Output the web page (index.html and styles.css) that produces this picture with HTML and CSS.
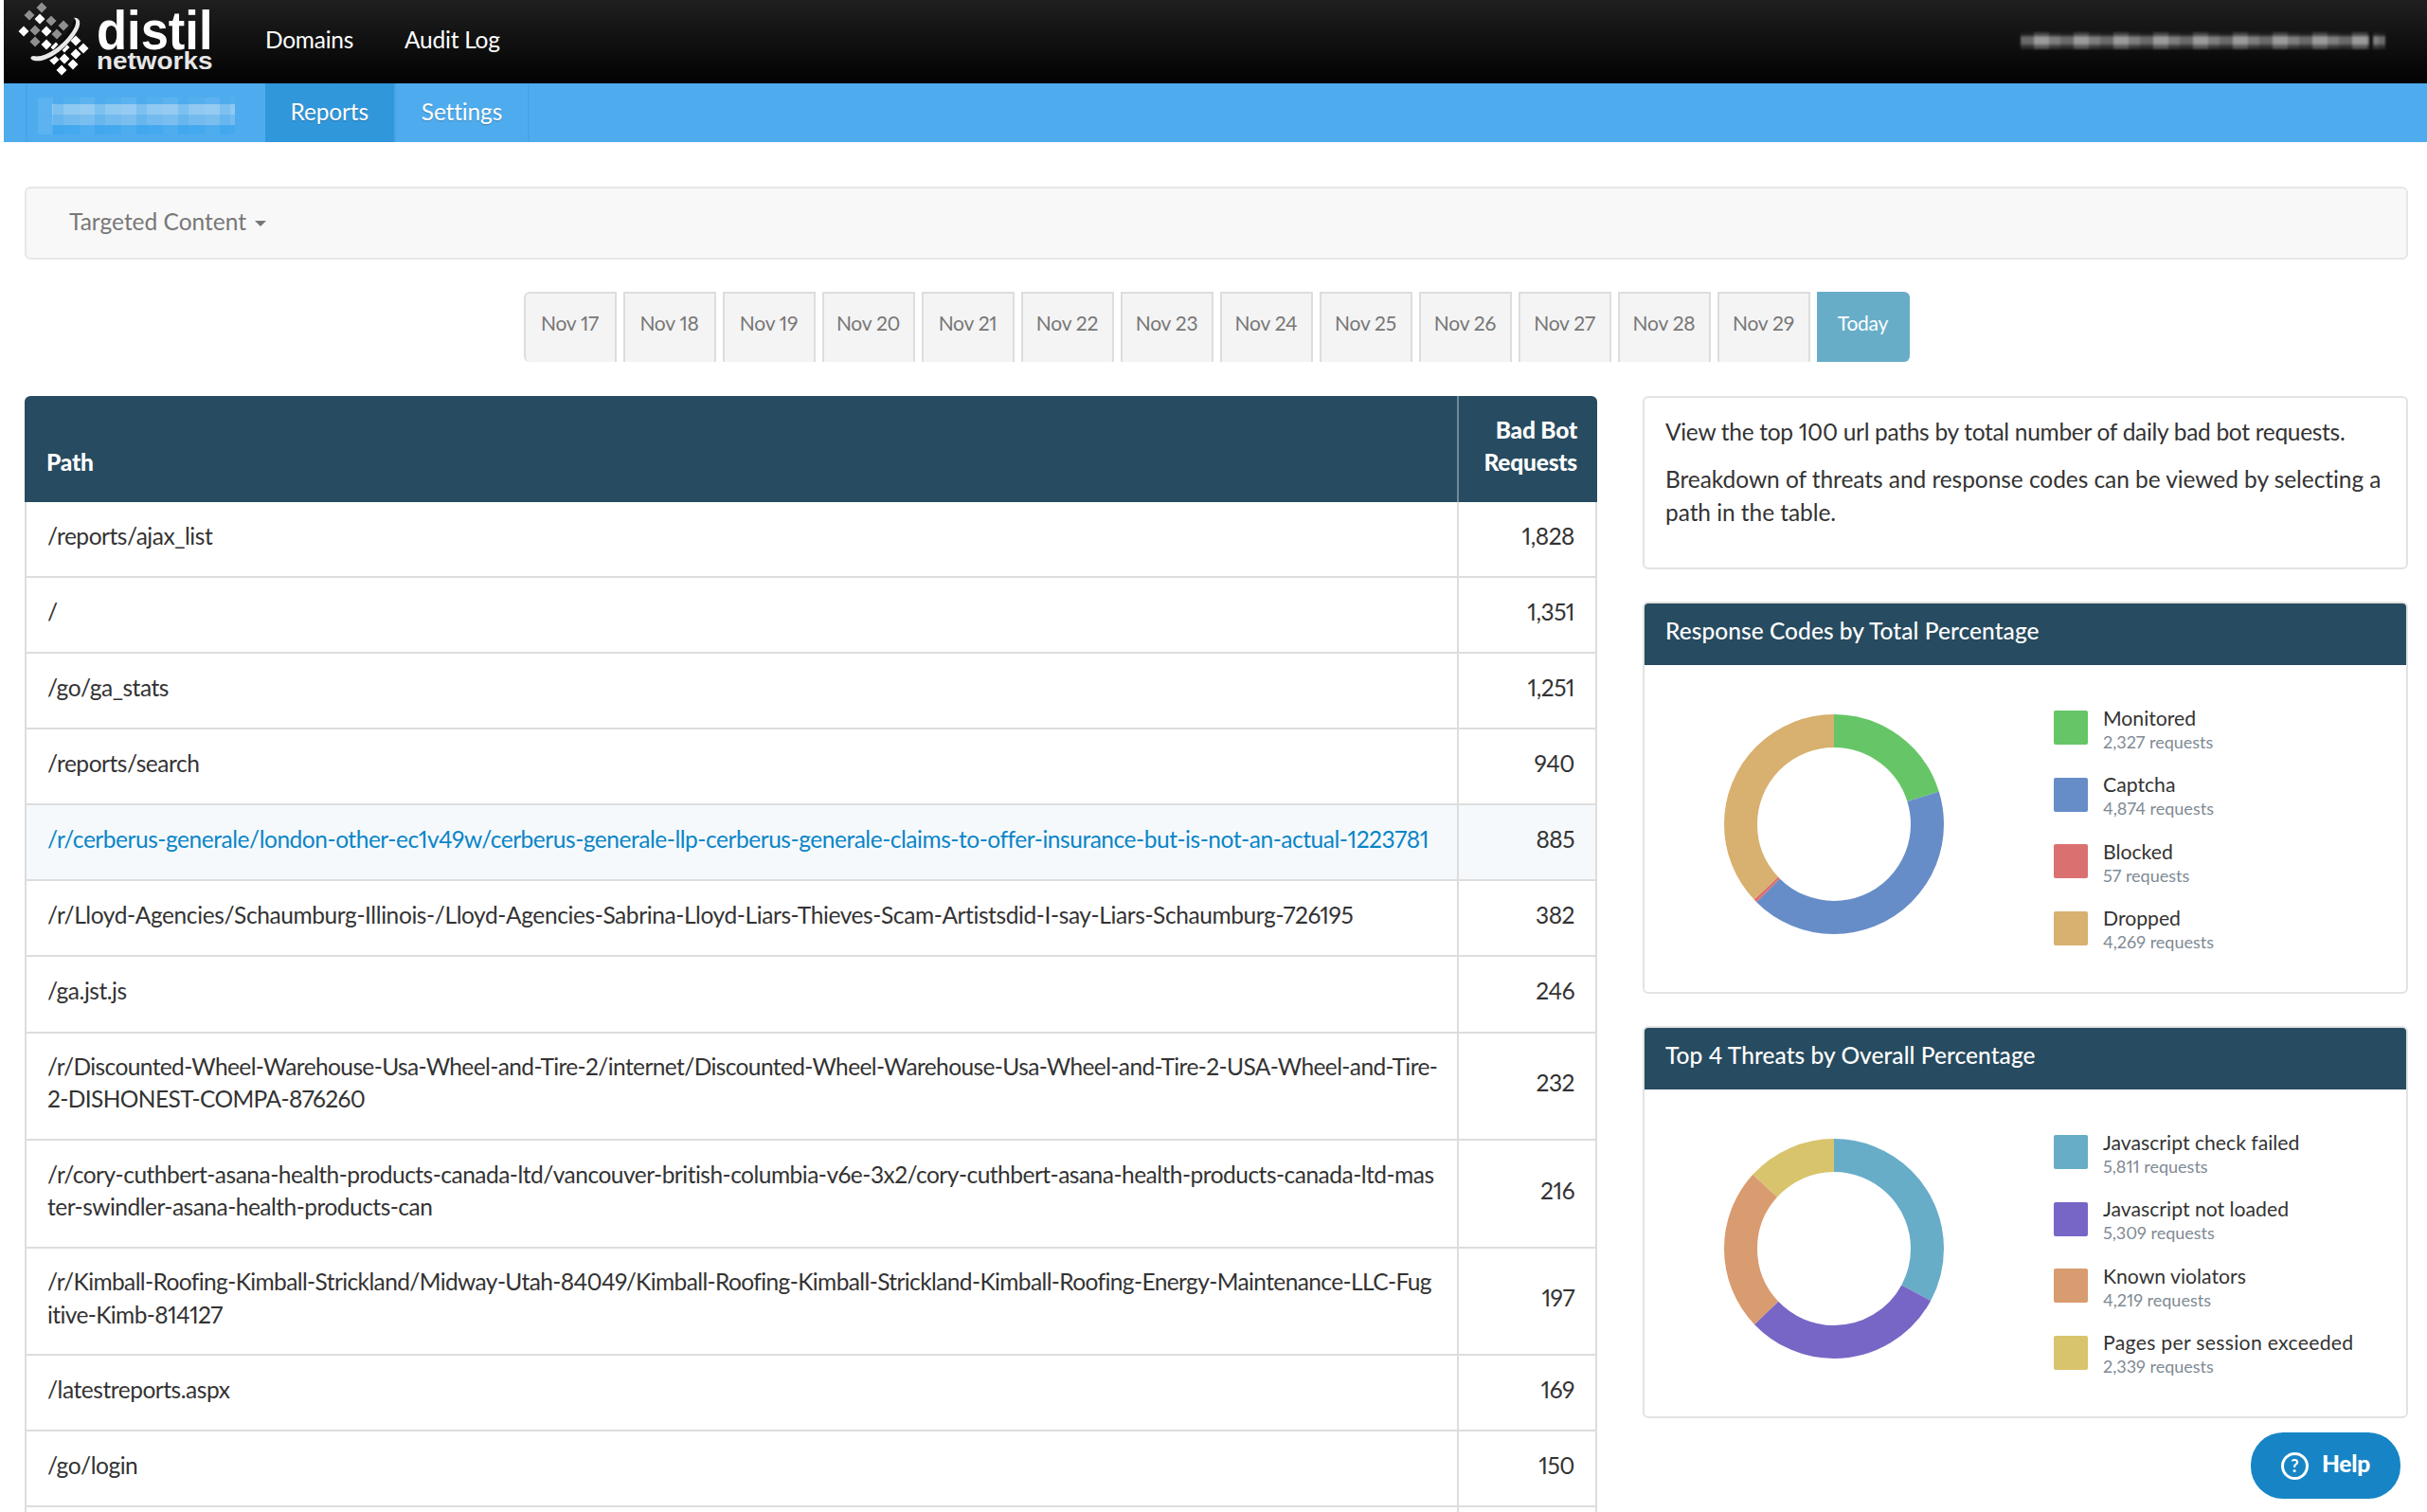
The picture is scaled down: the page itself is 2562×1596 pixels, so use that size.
FILE: index.html
```html
<!DOCTYPE html>
<html lang="en">
<head>
<meta charset="utf-8">
<title>Distil Networks - Reports</title>
<link rel="stylesheet" href="styles.css">
</head>
<body>
<div class="page">
  <header class="topbar">
    <svg class="logo" width="240" height="88" viewBox="4 0 240 88" aria-label="distil networks">
      <path class="dia-gray" d="M44 2.5l5.5 5.5-5.5 5.5-5.5-5.5zM31 10.500l5.500 5.500-5.500 5.500-5.500-5.500zM54 16.500l5.500 5.500-5.500 5.500-5.500-5.500zM67 21.500l5.500 5.500-5.500 5.500-5.500-5.500zM37 26.500l5.500 5.500-5.500 5.500-5.500-5.500zM60 30.500l5.500 5.500-5.500 5.500-5.500-5.500zM37 38.500l5.500 5.500-5.500 5.500-5.500-5.500z"/>
      <path class="dia-white" d="M42 14.500l5.500 5.500-5.500 5.500-5.500-5.500zM25 27.500l5.500 5.500-5.500 5.500-5.500-5.500zM49 27.500l5.500 5.500-5.500 5.500-5.500-5.500zM49 41.500l5.500 5.500-5.500 5.500-5.500-5.500zM80 37.500l5.500 5.500-5.500 5.500-5.500-5.500zM68 44.500l5.500 5.500-5.500 5.500-5.500-5.500zM88 45.500l5.500 5.500-5.500 5.500-5.500-5.500zM80 51.500l5.500 5.500-5.500 5.500-5.500-5.500zM68 56.500l5.500 5.500-5.500 5.500-5.500-5.500zM57 57.500l5.500 5.500-5.500 5.500-5.500-5.500zM77 62.500l5.500 5.500-5.500 5.500-5.500-5.500zM65 68.500l5.500 5.500-5.500 5.500-5.500-5.500zM59 44.500l5.500 5.500-5.500 5.500-5.500-5.500z"/>
      <path class="swoosh-gap" d="M34 63C50 68 70 48 82 22"/>
      <path class="swoosh" d="M35 59C31 60 32 63 36 64C50 67 72 50 82 32C87 23 83 18 78 19C82 22 80 28 75 35C65 49 47 62 35 59z"/>
      <text class="logo-big" x="102" y="52" textLength="122.500" lengthAdjust="spacingAndGlyphs">distil</text>
      <text class="logo-small" x="102" y="72.500" textLength="122.500" lengthAdjust="spacingAndGlyphs">networks</text>
    </svg>
    <nav class="topnav">
      <a class="topnav-link">Domains</a>
      <a class="topnav-link">Audit Log</a>
    </nav>
    <div class="user-blur"></div>
  </header>
  <div class="subbar">
    <div class="domain-cell"><div class="domain-blur"></div></div>
    <a class="subtab subtab-active">Reports</a>
    <a class="subtab subtab-settings">Settings</a>
  </div>
  <main class="content">
    <div class="filterbar">
      <span class="filter-label">Targeted Content</span><span class="caret"></span>
    </div>
    <div class="dates">
      <a class="date date-first">Nov 17</a>
      <a class="date">Nov 18</a>
      <a class="date">Nov 19</a>
      <a class="date">Nov 20</a>
      <a class="date">Nov 21</a>
      <a class="date">Nov 22</a>
      <a class="date">Nov 23</a>
      <a class="date">Nov 24</a>
      <a class="date">Nov 25</a>
      <a class="date">Nov 26</a>
      <a class="date">Nov 27</a>
      <a class="date">Nov 28</a>
      <a class="date">Nov 29</a>
      <a class="date date-today">Today</a>
    </div>
    <div class="columns">
      <table class="paths">
        <thead>
          <tr><th class="col-path">Path</th><th class="col-num">Bad Bot<br>Requests</th></tr>
        </thead>
        <tbody>
          <tr><td class="col-path">/reports/ajax_list</td><td class="col-num">1,828</td></tr>
          <tr><td class="col-path">/</td><td class="col-num">1,351</td></tr>
          <tr><td class="col-path">/go/ga_stats</td><td class="col-num">1,251</td></tr>
          <tr><td class="col-path">/reports/search</td><td class="col-num">940</td></tr>
          <tr class="row-active"><td class="col-path">/r/cerberus-generale/london-other-ec1v49w/cerberus-generale-llp-cerberus-generale-claims-to-offer-insurance-but-is-not-an-actual-1223781</td><td class="col-num">885</td></tr>
          <tr class="fit-loose"><td class="col-path">/r/Lloyd-Agencies/Schaumburg-Illinois-/Lloyd-Agencies-Sabrina-Lloyd-Liars-Thieves-Scam-Artistsdid-I-say-Liars-Schaumburg-726195</td><td class="col-num">382</td></tr>
          <tr><td class="col-path">/ga.jst.js</td><td class="col-num">246</td></tr>
          <tr class="row-two fit-tight"><td class="col-path">/r/Discounted-Wheel-Warehouse-Usa-Wheel-and-Tire-2/internet/Discounted-Wheel-Warehouse-Usa-Wheel-and-Tire-2-USA-Wheel-and-Tire-<br>2-DISHONEST-COMPA-876260</td><td class="col-num">232</td></tr>
          <tr class="row-two fit-mid"><td class="col-path">/r/cory-cuthbert-asana-health-products-canada-ltd/vancouver-british-columbia-v6e-3x2/cory-cuthbert-asana-health-products-canada-ltd-mas<br>ter-swindler-asana-health-products-can</td><td class="col-num">216</td></tr>
          <tr class="row-two fit-tight"><td class="col-path">/r/Kimball-Roofing-Kimball-Strickland/Midway-Utah-84049/Kimball-Roofing-Kimball-Strickland-Kimball-Roofing-Energy-Maintenance-LLC-Fug<br>itive-Kimb-814127</td><td class="col-num">197</td></tr>
          <tr><td class="col-path">/latestreports.aspx</td><td class="col-num">169</td></tr>
          <tr><td class="col-path">/go/login</td><td class="col-num">150</td></tr>
          <tr class="row-empty"><td class="col-path"></td><td class="col-num"></td></tr>
        </tbody>
      </table>
      <aside class="side">
        <section class="panel info">
          <p>View the top 100 url paths by total number of daily bad bot requests.</p>
          <p class="info-wide">Breakdown of threats and response codes can be viewed by selecting a path in the table.</p>
        </section>
        <section class="panel chart">
          <h2 class="chart-title">Response Codes by Total Percentage</h2>
          <div class="chart-body">
            <svg class="donut" width="232" height="232" viewBox="0 0 232 232">
              <g transform="rotate(-90 116 116)" fill="none" stroke-width="35">
                <circle cx="116" cy="116" r="98.5" pathLength="11527" stroke="#66c667" stroke-dasharray="2327 11527"/>
                <circle cx="116" cy="116" r="98.5" pathLength="11527" stroke="#678dc8" stroke-dasharray="4874 11527" stroke-dashoffset="-2327"/>
                <circle cx="116" cy="116" r="98.5" pathLength="11527" stroke="#db7070" stroke-dasharray="57 11527" stroke-dashoffset="-7201"/>
                <circle cx="116" cy="116" r="98.5" pathLength="11527" stroke="#d8b06f" stroke-dasharray="4269 11527" stroke-dashoffset="-7258"/>
              </g>
            </svg>
            <ul class="legend">
              <li class="legend-item"><span class="swatch sw-green"></span><div class="legend-text"><div class="legend-label">Monitored</div><div class="legend-sub">2,327 requests</div></div></li>
              <li class="legend-item"><span class="swatch sw-blue"></span><div class="legend-text"><div class="legend-label">Captcha</div><div class="legend-sub">4,874 requests</div></div></li>
              <li class="legend-item"><span class="swatch sw-red"></span><div class="legend-text"><div class="legend-label">Blocked</div><div class="legend-sub">57 requests</div></div></li>
              <li class="legend-item"><span class="swatch sw-tan"></span><div class="legend-text"><div class="legend-label">Dropped</div><div class="legend-sub">4,269 requests</div></div></li>
            </ul>
          </div>
        </section>
        <section class="panel chart">
          <h2 class="chart-title">Top 4 Threats by Overall Percentage</h2>
          <div class="chart-body">
            <svg class="donut" width="232" height="232" viewBox="0 0 232 232">
              <g transform="rotate(-90 116 116)" fill="none" stroke-width="35">
                <circle cx="116" cy="116" r="98.5" pathLength="17678" stroke="#67adc8" stroke-dasharray="5811 17678"/>
                <circle cx="116" cy="116" r="98.5" pathLength="17678" stroke="#7866c6" stroke-dasharray="5309 17678" stroke-dashoffset="-5811"/>
                <circle cx="116" cy="116" r="98.5" pathLength="17678" stroke="#d99b70" stroke-dasharray="4219 17678" stroke-dashoffset="-11120"/>
                <circle cx="116" cy="116" r="98.5" pathLength="17678" stroke="#d8c46c" stroke-dasharray="2339 17678" stroke-dashoffset="-15339"/>
              </g>
            </svg>
            <ul class="legend">
              <li class="legend-item"><span class="swatch sw-teal"></span><div class="legend-text"><div class="legend-label">Javascript check failed</div><div class="legend-sub">5,811 requests</div></div></li>
              <li class="legend-item"><span class="swatch sw-purple"></span><div class="legend-text"><div class="legend-label">Javascript not loaded</div><div class="legend-sub">5,309 requests</div></div></li>
              <li class="legend-item"><span class="swatch sw-orange"></span><div class="legend-text"><div class="legend-label">Known violators</div><div class="legend-sub">4,219 requests</div></div></li>
              <li class="legend-item"><span class="swatch sw-yellow"></span><div class="legend-text"><div class="legend-label legend-label-wide">Pages per session exceeded</div><div class="legend-sub">2,339 requests</div></div></li>
            </ul>
          </div>
        </section>
      </aside>
    </div>
  </main>
  <a class="help"><span class="help-icon">?</span><span class="help-text">Help</span></a>
</div>
</body>
</html>
```
FILE: styles.css
```css
* { box-sizing: border-box; }
html, body { margin: 0; height: 100%; overflow: hidden; background: #fff; }
body {
  font-family: "Lato", "Open Sans", sans-serif;
  font-size: 24.5px;
  line-height: 34.3px;
  color: #333;
  font-variant-numeric: proportional-nums;
}
.page { margin-left: 4px; height: 1596px; overflow: hidden; }

.topbar {
  height: 88px;
  display: flex;
  align-items: center;
  background: linear-gradient(#1f1f1f, #020202);
}
.logo { display: block; flex: none; }
.dia-gray { fill: #8f8f8f; }
.dia-white { fill: #fff; }
.swoosh-gap { fill: none; stroke: #0b0b0b; stroke-width: 7; }
.swoosh { fill: #e8e8e8; }
.logo-big { fill: #fff; font: 700 57px "Liberation Sans", sans-serif; }
.logo-small { fill: #e6e6e6; font: 700 25px "Liberation Sans", sans-serif; }
.topnav { display: flex; gap: 54px; margin-left: 36px; margin-bottom: 4px; }
.topnav-link { color: #fff; letter-spacing: -.25px; }
.user-blur {
  margin-left: auto;
  margin-right: 44px;
  margin-bottom: 3px;
  width: 385px;
  height: 18px;
  filter: blur(1px);
  background:
    linear-gradient(90deg, transparent 95.5%, #111 95.5%, #111 96.5%, transparent 96.5%),
    repeating-linear-gradient(90deg, rgba(0,0,0,.25) 0 14px, rgba(255,255,255,.12) 14px 30px, rgba(0,0,0,.1) 30px 42px),
    linear-gradient(#2a2a2a 0 15%, #8c8c8c 30% 65%, #3a3a3a 85%);
}

.subbar {
  height: 62px;
  display: flex;
  background: #4eacee;
}
.domain-cell {
  margin-left: 23px;
  width: 252.6px;
  border-left: 2px solid #48a4e6;
  padding: 15px 0 0 11px;
}
.domain-blur {
  width: 208px;
  height: 39px;
  background:
    repeating-linear-gradient(90deg, rgba(255,255,255,.08) 0 16px, rgba(78,172,238,.25) 16px 27px, rgba(255,255,255,.03) 27px 44px),
    linear-gradient(90deg, #4eacee 0 7%, transparent 7%),
    linear-gradient(#4eacee 0 18%, #8cc7f1 18% 45%, #6fb9ee 45% 75%, #3ea6ee 75%);
}
.subtab {
  display: flex;
  align-items: center;
  justify-content: center;
  padding-bottom: 2px;
  color: #fff;
  letter-spacing: -.15px;
  text-shadow: 0 1px 1px rgba(0, 0, 0, .25);
  border-right: 2px solid #48a4e6;
}
.subtab-active { width: 138.4px; background: #3197db; }
.subtab-settings { width: 141px; }

.content { padding: 47px 20px 0 22px; }

.filterbar {
  height: 77px;
  border: 2px solid #e7e7e7;
  border-radius: 6px;
  background: #f8f8f8;
  display: flex;
  align-items: center;
  padding: 0 0 3px 45px;
  color: #777;
}
.caret {
  margin-left: 9px;
  margin-top: 3px;
  border-top: 6px solid #777;
  border-left: 6px solid transparent;
  border-right: 6px solid transparent;
}

.dates {
  display: flex;
  justify-content: center;
  gap: 7px;
  margin-top: 34px;
}
.date {
  width: 98px;
  height: 74px;
  border: 2px solid #ddd;
  border-bottom: 0;
  background: #f4f4f4;
  color: #777;
  font-size: 21px;
  letter-spacing: -.25px;
  line-height: 34px;
  padding-top: 14px;
  text-align: center;
}
.date-first { border-radius: 6px 0 0 6px; }
.date-today {
  background: #67adc8;
  border-color: #67adc8;
  color: #fff;
  border-radius: 0 6px 6px 0;
}

.columns {
  display: grid;
  grid-template-columns: 1660px 808px;
  column-gap: 48px;
  align-items: start;
  margin-top: 36px;
}

.paths {
  width: 1660px;
  table-layout: fixed;
  border-collapse: separate;
  border-spacing: 0;
}
.paths th {
  background: #274b60;
  color: #fff;
  font-weight: 900;
  letter-spacing: -.2px;
  padding: 18.7px 0 24.7px;
  vertical-align: bottom;
  text-align: left;
}
.paths th.col-path { border-top-left-radius: 6px; padding-left: 23px; }
.paths th.col-num {
  border-top-right-radius: 6px;
  border-left: 2px solid #6f8a9a;
  padding-right: 21px;
  text-align: right;
}
.col-num { width: 148px; }
.paths td {
  padding: 18.9px 0 24.9px;
  border-bottom: 2px solid #ddd;
  vertical-align: middle;
}
.paths .row-two td { padding: 18.5px 0 24.5px; }
.paths td.col-path {
  border-left: 2px solid #ddd;
  padding-left: 22px;
  white-space: nowrap;
  letter-spacing: -.46px;
}
.paths .fit-loose td.col-path { letter-spacing: -.4px; }
.paths .fit-mid td.col-path { letter-spacing: -.51px; }
.paths .fit-tight td.col-path { letter-spacing: -.61px; }
.paths td.col-num {
  border-left: 2px solid #ddd;
  border-right: 2px solid #ddd;
  padding-right: 22px;
  letter-spacing: -.5px;
  text-align: right;
}
.row-active td { background: #f5f9fc; }
.row-active .col-path { color: #0a85c7; }
.row-empty td { height: 80px; }

.panel {
  width: 808px;
  border: 2px solid #e3e3e3;
  border-radius: 6px;
  background: #fff;
}
.info { height: 183px; padding: 19px 22px 0; margin-bottom: 33.5px; letter-spacing: -.3px; }
.info p { margin: 0 0 16px; }
.info .info-wide { letter-spacing: -.06px; }
.chart { height: 414.5px; margin-bottom: 33.5px; }
.chart-title {
  margin: 0;
  height: 65.5px;
  background: #274b60;
  color: #fff;
  font-size: 24.5px;
  font-weight: 500;
  letter-spacing: .05px;
  line-height: 58px;
  padding-left: 22px;
  border-radius: 4px 4px 0 0;
}
.chart-body {
  display: flex;
  align-items: flex-start;
  padding: 48px 0 0 84px;
}
.donut { display: block; flex: none; margin-top: 4px; }
.legend {
  list-style: none;
  margin: 0 0 0 116px;
  padding: 0;
  display: flex;
  flex-direction: column;
  gap: 25px;
}
.legend-item { display: flex; align-items: flex-start; gap: 16px; }
.swatch { display: block; flex: none; width: 36px; height: 36px; border-radius: 2px; }
.sw-green { background: #66c667; }
.sw-blue { background: #678dc8; }
.sw-red { background: #db7070; }
.sw-tan { background: #d8b06f; }
.sw-teal { background: #67adc8; }
.sw-purple { background: #7866c6; }
.sw-orange { background: #d99b70; }
.sw-yellow { background: #d8c46c; }
.legend-text { margin-top: -4.5px; }
.legend-label { font-size: 21.2px; line-height: 24px; color: #333; }
.legend-label-wide { letter-spacing: .3px; }
.legend-sub { font-size: 18px; line-height: 26px; color: #7f8a94; }

.help {
  position: fixed;
  left: 2376px;
  top: 1512px;
  width: 158px;
  height: 70px;
  border-radius: 34px;
  background: #1785c5;
  color: #fff;
  display: flex;
  align-items: center;
  padding: 0 0 4px 32px;
  gap: 14px;
}
.help-icon {
  width: 29px;
  height: 29px;
  margin-top: 4px;
  border: 3px solid #fff;
  border-radius: 50%;
  font-size: 18px;
  line-height: 23px;
  text-align: center;
  font-weight: 700;
}
.help-text { font-weight: 900; letter-spacing: -.2px; }
```
